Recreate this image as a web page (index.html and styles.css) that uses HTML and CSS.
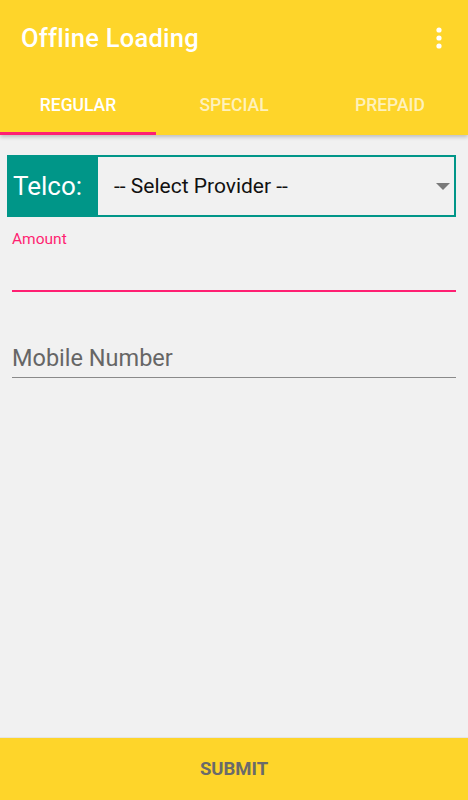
FILE: index.html
```html
<!DOCTYPE html>
<html>
<head>
<meta charset="utf-8">
<link rel="stylesheet" href="styles.css">
</head>
<body>
<div class="app">
  <header class="appbar">
    <div class="toolbar">
      <h1 class="title">Offline Loading</h1>
      <svg class="more" width="8" height="22" viewBox="0 0 8 22"><circle cx="4" cy="3" r="2.6" fill="#fff"/><circle cx="4" cy="11" r="2.6" fill="#fff"/><circle cx="4" cy="19" r="2.6" fill="#fff"/></svg>
    </div>
    <nav class="tabs">
      <div class="tab active">REGULAR</div>
      <div class="tab">SPECIAL</div>
      <div class="tab">PREPAID</div>
    </nav>
  </header>
  <main class="content">
    <div class="telco">
      <div class="telco-label">Telco:</div>
      <div class="telco-select">
        <span>-- Select Provider --</span>
        <svg class="caret" width="14" height="7" viewBox="0 0 14 7"><path d="M0 0H14L7 7Z" fill="#7a7a7a"/></svg>
      </div>
    </div>
    <div class="field focused">
      <label class="float-label">Amount</label>
      <div class="input"></div>
    </div>
    <div class="field">
      <div class="input hint">Mobile Number</div>
    </div>
  </main>
  <footer class="submit">SUBMIT</footer>
</div>
</body>
</html>
```
FILE: styles.css
```css
* { box-sizing: border-box; }
html, body { margin: 0; padding: 0; }
body {
  width: 468px;
  height: 800px;
  background: #f1f1f1;
  font-family: Roboto, "Noto Sans", sans-serif;
  overflow: hidden;
}
.app {
  display: flex;
  flex-direction: column;
  height: 800px;
}
.appbar {
  background: #fed52a;
  box-shadow: 0 2px 4px rgba(0,0,0,0.22);
  position: relative;
  z-index: 1;
}
.toolbar {
  height: 76px;
  display: flex;
  align-items: center;
  justify-content: space-between;
  padding: 0 25px 0 21px;
}
.title {
  margin: 0;
  font-size: 25.5px;
  font-weight: 500;
  color: #fff;
  letter-spacing: 0.25px;
}
.tabs {
  display: flex;
  height: 59px;
}
.tab {
  flex: 1;
  display: flex;
  align-items: center;
  justify-content: center;
  font-size: 17.5px;
  font-weight: 500;
  color: rgba(255,255,255,0.7);
  padding-top: 2px;
  border-bottom: 3px solid transparent;
}
.tab.active {
  color: #fff;
  border-bottom-color: #ff1f72;
}
.content {
  flex: 1;
  padding: 20px 12px 0 7px;
}
.telco {
  display: flex;
  height: 62px;
  border: 2px solid #009688;
}
.telco-label {
  width: 89px;
  background: #009688;
  color: #fff;
  font-size: 26px;
  display: flex;
  align-items: center;
  padding-left: 4px;
}
.telco-select {
  flex: 1;
  display: flex;
  align-items: center;
  justify-content: space-between;
  padding: 0 4px 0 16px;
  font-size: 21px;
  color: #111;
}
.field {
  margin-left: 5px;
}
.field.focused {
  margin-top: 13px;
}
.float-label {
  display: block;
  font-size: 15.5px;
  color: #ff1f72;
  height: 18px;
}
.field.focused .input {
  height: 44px;
  border-bottom: 2px solid #ff1f72;
}
.field + .field { margin-top: 45px; }
.input.hint {
  font-size: 23.5px;
  color: #666;
  height: 41px;
  padding-top: 7px;
  border-bottom: 1px solid #8a8a8a;
}
.submit {
  height: 63px;
  background: #fed52a;
  display: flex;
  align-items: center;
  justify-content: center;
  font-size: 18.5px;
  font-weight: 700;
  color: #6a6a6a;
  border-top: 1px solid #e4e4e4;
}
```
